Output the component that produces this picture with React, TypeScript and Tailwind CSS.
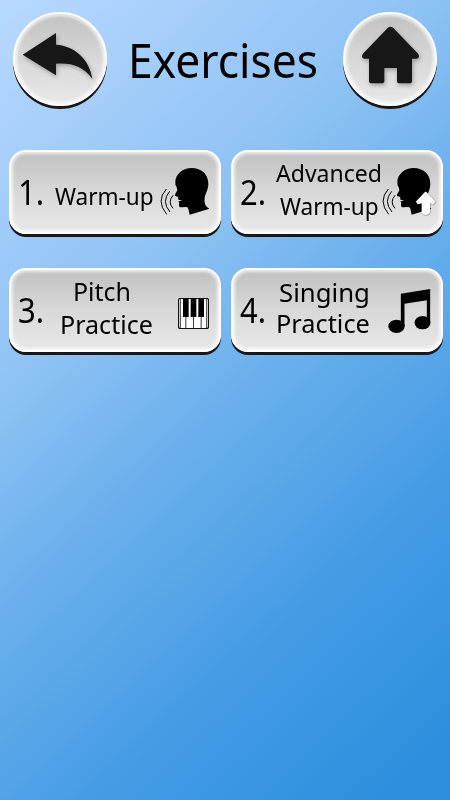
import React from 'react'
import clsx from 'clsx'

const face = 'bg-linear-to-b from-[#c1c1c1] via-[#d8d8d8] to-[#e8e8e8] border-[2.5px] border-white shadow-[0_3px_0_#1d1612,inset_0_0_3px_2px_rgba(255,255,255,0.7)]'

function BackIcon() {
    return (
        <svg viewBox="39 36 282 282" className="w-[94px] h-[94px] drop-shadow-[1px_2px_2px_rgba(0,0,0,0.3)]">
            <path fill="#171717" d="M68 164 L168 99 V134 C218 137 268 172 277 237 C250 200 218 188 168 191 V226 Z" />
        </svg>
    )
}

function HomeIcon() {
    return (
        <svg viewBox="39 36 282 282" className="w-[94px] h-[94px] drop-shadow-[1px_2px_2px_rgba(0,0,0,0.3)]">
            <path
                fill="#171717"
                d="M173 84 Q181 77 190 84 L263 160 Q267 164 267 169 Q267 176 260 176 H246 V242 Q246 250 238 250 H209 Q201 250 201 242 V204 H163 V242 Q163 250 155 250 H125 Q117 250 117 242 V176 H103 Q96 176 96 169 Q96 164 100 160 Z"
            />
        </svg>
    )
}

function VoiceIcon({ advanced = false }) {
    return (
        <svg viewBox="150 78 150 150" className="w-[50px] h-[50px] overflow-visible">
            <path d="M245 84 C274 84 295 103 295 131 C295 150 285 162 284 174 C282 190 286 199 298 206 L239 224 L235 206 Q234 200 227 201 L215 202 Q206 202 207 195 L208 189 L205 184 L217 182 L206 179 Q203 177 205 171 L196 168 Q193 166 196 162 L202 151 L200 142 Q195 136 196 127 C196 102 219 84 245 84 Z" />
            <g fill="none" stroke="#000" strokeWidth="3">
                <path d="M169 147 Q137 183 170 223" />
                <path d="M179 154 Q153 184 180 216" />
                <path d="M189 166 Q172 186 189 205" />
            </g>
            {advanced && (
                <path
                    fill="#fff"
                    stroke="#fff"
                    strokeWidth="4"
                    strokeLinejoin="round"
                    className="drop-shadow-[1px_1px_1px_rgba(0,0,0,0.6)]"
                    d="M281 157 L308 185 L304 191 L292 187 V217 Q281 229 271 217 V187 L258 191 L254 185 Z"
                />
            )}
        </svg>
    )
}

function PianoIcon() {
    return (
        <svg viewBox="0 0 93 93" className="w-[31px] h-[31px]">
            <rect x="1.5" y="1.5" width="90" height="90" rx="5" fill="#fff" stroke="#111" strokeWidth="3.5" />
            <path stroke="#111" strokeWidth="2.5" d="M7 2 V91 M23.5 50 V91 M46.5 50 V91 M69.5 50 V91 M86 2 V91" />
            <path d="M15 2 H32 V57 H15 Z M38 2 H55 V57 H38 Z M61 2 H78 V57 H61 Z" />
        </svg>
    )
}

function NotesIcon() {
    return (
        <svg viewBox="487 87 128 132" className="w-[43px] h-[44px]">
            <path d="M525 101 L613 87 V187 H603 V121 L536 131 V198 H525 Z" />
            <ellipse cx="512" cy="199" rx="24.5" ry="20" />
            <ellipse cx="590" cy="188" rx="24" ry="20" />
        </svg>
    )
}

const exercises = [
    {
        id: 1,
        lines: [{ text: 'Warm-up', style: 'scale-x-[0.94]' }],
        label: 'pt-[27px] text-[24px] leading-[33px]',
        icon: <VoiceIcon />,
        iconBox: 'mt-[13.5px] mr-[9.5px]',
    },
    {
        id: 2,
        lines: [
            { text: 'Advanced', style: 'ml-[-1px] scale-x-[0.96]' },
            { text: 'Warm-up', style: 'ml-[3px] scale-x-[0.94]' },
        ],
        label: 'pt-[4px] text-[24px] leading-[33px]',
        icon: <VoiceIcon advanced />,
        iconBox: 'mt-[14px] mr-[9.5px]',
    },
    {
        id: 3,
        lines: [
            { text: 'Pitch', style: 'ml-[18px] scale-x-[0.96]' },
            { text: 'Practice', style: 'ml-[5px] scale-x-[0.965]' },
        ],
        label: 'pt-[5px] text-[26px] leading-[33px]',
        icon: <PianoIcon />,
        iconBox: 'mt-[27.5px] mr-[10.5px]',
    },
    {
        id: 4,
        lines: [
            { text: 'Singing', style: 'ml-[2px] scale-x-[0.99]' },
            { text: 'Practice', style: 'ml-[-1px] scale-x-[0.975]' },
        ],
        label: 'pt-[7px] text-[26px] leading-[31px]',
        icon: <NotesIcon />,
        iconBox: 'mt-[19px] mr-[10.5px]',
    },
]

function ExerciseCard({ item }) {
    return (
        <button className={clsx('flex items-start h-[84px] rounded-[17px] text-left', face)}>
            <span className="w-[44px] shrink-0 pl-[7px] pt-[20px] text-[34px] leading-[40px]">
                <span className="inline-block origin-left scale-x-[0.91]">{item.id}.</span>
            </span>
            <span className={clsx('flex flex-col items-start w-0 grow whitespace-nowrap', item.label)}>
                {item.lines.map((line) => (
                    <span key={line.text} className={clsx('origin-left', line.style)}>{line.text}</span>
                ))}
            </span>
            <span className={clsx('shrink-0', item.iconBox)}>{item.icon}</span>
        </button>
    )
}

function RoundButton({ label, children }) {
    return (
        <button aria-label={label} className={clsx('flex items-center justify-center w-[94px] h-[94px] rounded-full shrink-0', face)}>
            <span className="shrink-0">{children}</span>
        </button>
    )
}

export default function App() {
    return (
        <div className="w-[450px] h-[800px] overflow-hidden bg-[linear-gradient(137deg,#b9d9ff_0%,#8ec2f4_33%,#6bb0ec_50%,#459ce5_73%,#2c8edd_96%)] font-['Noto_Sans','Open_Sans',sans-serif] text-black">
            <header className="flex items-start justify-between pt-[12px] px-[13px] h-[150px]">
                <RoundButton label="Back"><BackIcon /></RoundButton>
                <h1 className="w-[195px] pt-[16px] whitespace-nowrap text-[48px] leading-[64px]">
                    <span className="inline-block origin-left scale-x-[0.925]">Exercises</span>
                </h1>
                <RoundButton label="Home"><HomeIcon /></RoundButton>
            </header>
            <main className="grid grid-cols-2 gap-x-[10px] gap-y-[34px] pl-[9px] pr-[7px]">
                {exercises.map((item) => (
                    <ExerciseCard key={item.id} item={item} />
                ))}
            </main>
        </div>
    )
}
